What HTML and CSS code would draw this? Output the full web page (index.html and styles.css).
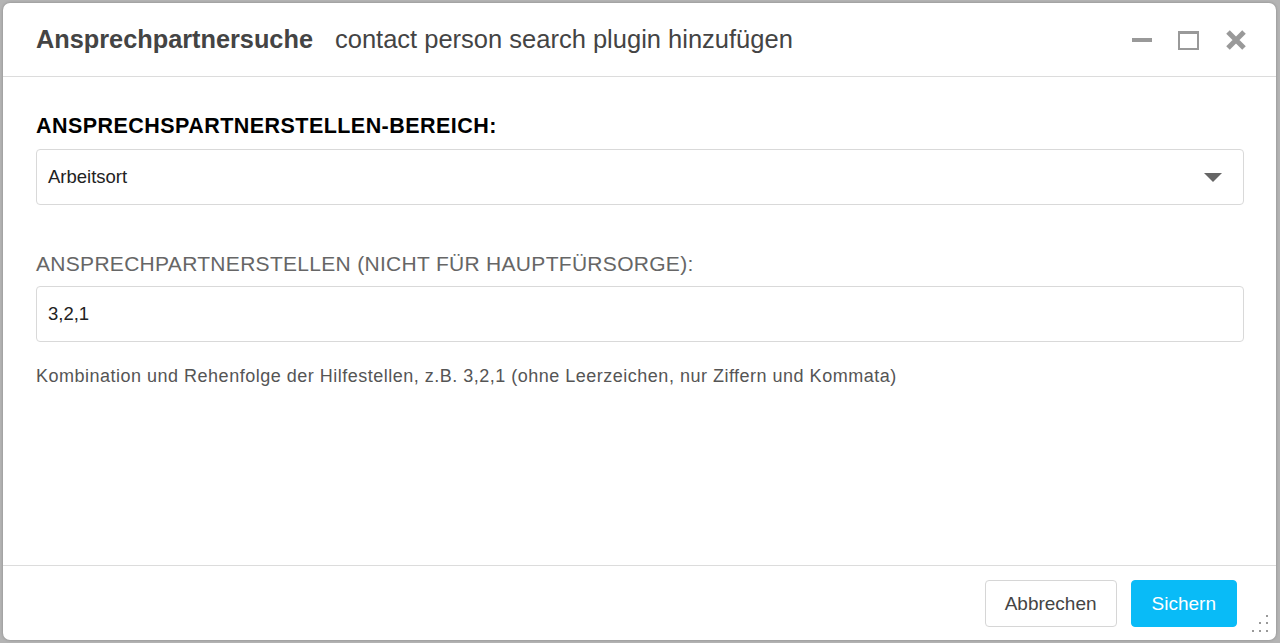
FILE: index.html
```html
<!DOCTYPE html>
<html lang="de">
<head>
  <meta charset="UTF-8" />
  <meta name="viewport" content="width=device-width, initial-scale=1" />
  <title>Ansprechpartnersuche</title>
  <link rel="stylesheet" href="styles.css">
</head>
<body>
  <div class="dialog">
    <header class="dialog-header">
      <h1 class="dialog-title">Ansprechpartnersuche</h1>
      <span class="dialog-subtitle">contact person search plugin hinzufügen</span>
      <div class="window-controls">
        <button class="ctl" title="Minimieren">
          <svg width="24" height="24" viewBox="0 0 24 24"><rect x="4" y="10" width="20" height="4" fill="#999"/></svg>
        </button>
        <button class="ctl" title="Maximieren">
          <svg width="24" height="24" viewBox="0 0 24 24"><rect x="3" y="4" width="19" height="17" fill="none" stroke="#999" stroke-width="2"/><rect x="2" y="3" width="21" height="3" fill="#999"/></svg>
        </button>
        <button class="ctl" title="Schließen">
          <svg width="24" height="24" viewBox="0 0 24 24"><path d="M4 4 L20 20 M20 4 L4 20" stroke="#999" stroke-width="5"/></svg>
        </button>
      </div>
    </header>

    <main class="dialog-body">
      <label class="field-label strong" for="bereich">ANSPRECHSPARTNERSTELLEN-BEREICH:</label>
      <div class="select">
        <span id="bereich">Arbeitsort</span>
        <svg class="caret" width="18" height="9" viewBox="0 0 18 9"><path d="M0 0 H18 L9 9 Z" fill="#666"/></svg>
      </div>

      <label class="field-label second" for="stellen">ANSPRECHPARTNERSTELLEN (NICHT FÜR HAUPTFÜRSORGE):</label>
      <input class="text-input" type="text" id="stellen" value="3,2,1" />
      <p class="help">Kombination und Rehenfolge der Hilfestellen, z.B. 3,2,1 (ohne Leerzeichen, nur Ziffern und Kommata)</p>
    </main>

    <footer class="dialog-footer">
      <button class="btn">Abbrechen</button>
      <button class="btn primary">Sichern</button>
      <svg class="grip" width="18" height="18" viewBox="0 0 18 18" fill="#999">
        <rect x="14" y="0" width="2" height="2"/>
        <rect x="7" y="7" width="2" height="2"/><rect x="14" y="7" width="2" height="2"/>
        <rect x="0" y="15" width="2" height="2"/><rect x="7" y="15" width="2" height="2"/><rect x="14" y="15" width="2" height="2"/>
      </svg>
    </footer>
  </div>
</body>
</html>
```

FILE: styles.css
```css
html, body {
  margin: 0;
  height: 100%;
}
body {
  font-family: "Liberation Sans", Arial, Helvetica, sans-serif;
  background: #b4b4b4;
  padding: 3px 4px 3px 3px;
  box-sizing: border-box;
  color: #333;
}
.dialog {
  height: 637px;
  background: #fff;
  border-radius: 7px;
  display: flex;
  flex-direction: column;
  box-shadow: 0 0 3px rgba(0,0,0,0.25);
}
.dialog-header {
  height: 74px;
  box-sizing: border-box;
  border-bottom: 1px solid #dcdcdc;
  display: flex;
  align-items: center;
  padding: 0 28px 0 33px;
}
.dialog-title {
  margin: 0;
  font-size: 25.3px;
  font-weight: bold;
  color: #444;
}
.dialog-subtitle {
  margin-left: 22px;
  font-size: 25.5px;
  color: #444;
}
.window-controls {
  margin-left: auto;
  display: flex;
  gap: 24px;
}
.ctl {
  background: none;
  border: 0;
  padding: 0;
  width: 24px;
  height: 24px;
  cursor: pointer;
}
.ctl svg {
  display: block;
}
.dialog-body {
  flex: 1;
  padding: 38px 32px 0 33px;
  display: flex;
  flex-direction: column;
}
.field-label {
  font-size: 21px;
  line-height: 22px;
  margin-bottom: 12px;
  color: #666;
  letter-spacing: 0.3px;
}
.field-label.strong {
  font-size: 21.5px;
  letter-spacing: 0.45px;
  font-weight: bold;
  color: #000;
}
.field-label.second {
  margin-top: 48px;
  margin-bottom: 11px;
}
.select, .text-input {
  height: 56px;
  box-sizing: border-box;
  border: 1px solid #d9d9d9;
  border-radius: 4px;
  padding: 0 11px;
  font-family: inherit;
  font-size: 18.5px;
  color: #222;
}
.select {
  display: flex;
  align-items: center;
  justify-content: space-between;
  padding-right: 21px;
}
.caret {
  display: block;
}
.text-input {
  width: 100%;
  outline: none;
}
.help {
  margin: 24px 0 0;
  font-size: 18px;
  letter-spacing: 0.5px;
  line-height: 20px;
  color: #555;
}
.dialog-footer {
  height: 75px;
  box-sizing: border-box;
  border-top: 1px solid #dcdcdc;
  display: flex;
  justify-content: flex-end;
  align-items: flex-start;
  gap: 14px;
  padding: 14px 39px 0 0;
  position: relative;
}
.btn {
  height: 47px;
  padding: 0 19px;
  font-family: inherit;
  font-size: 19px;
  background: #fff;
  color: #444;
  border: 1px solid #d6d6d6;
  border-radius: 4px;
  cursor: pointer;
}
.btn.primary {
  padding: 0 20px;
  background: #09bbf7;
  border-color: #09bbf7;
  color: #fff;
}
.grip {
  position: absolute;
  right: 6px;
  bottom: 7px;
}
```
